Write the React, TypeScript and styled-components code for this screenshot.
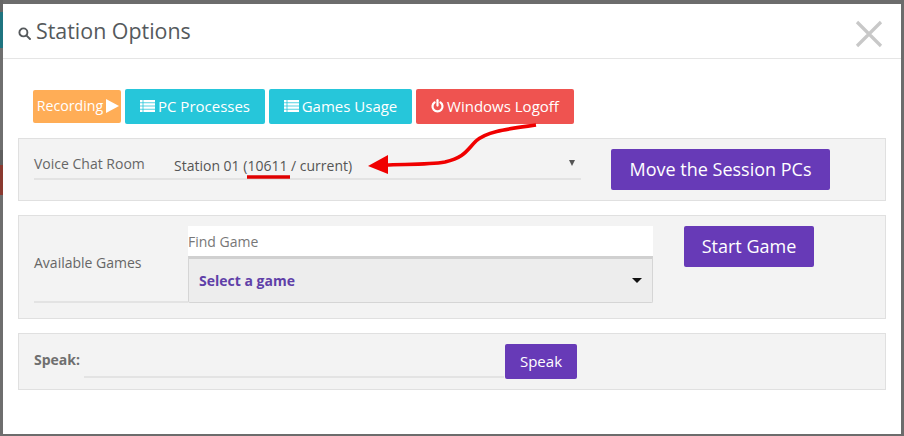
import React from "react";
import styled, { createGlobalStyle } from "styled-components";

const Global = createGlobalStyle`
  html, body { margin: 0; padding: 0; width: 904px; height: 436px; overflow: hidden; background: #6b6b6b; }
  body { font-family: "Open Sans", "Liberation Sans", sans-serif; }
  * { box-sizing: border-box; }
`;

const Backdrop = styled.div`
  width: 904px;
  height: 436px;
  padding: 4px 3px 2px 3px;
  background-color: #6c6c6c;
  background-image: linear-gradient(
    to bottom,
    #666 0 12px,
    #1f7480 12px 48px,
    #6f6f6f 48px 150px,
    #5f5f5f 150px 165px,
    #8a3a30 165px 195px,
    #6e6e6e 195px 100%
  );
  background-size: 3px 100%;
  background-repeat: no-repeat;
`;

const Modal = styled.div`
  position: relative;
  width: 898px;
  height: 430px;
  background: #fff;
`;

const Header = styled.header`
  height: 55px;
  border-bottom: 1px solid #e5e5e5;
  display: flex;
  align-items: center;
  justify-content: space-between;
  padding: 0 18px 0 15px;
`;

const Title = styled.h4`
  margin: 0;
  display: flex;
  align-items: center;
  gap: 5px;
  font-size: 21.4px;
  font-weight: 400;
  color: #55595c;
  line-height: 24px;
`;

const Close = styled.div`
  width: 28px;
  height: 28px;
  margin-top: 5px;
`;

const Body = styled.div`
  padding: 30px 15px 0;
`;

const Toolbar = styled.div`
  display: flex;
  align-items: center;
  gap: 4px;
  padding-left: 15px;
  margin-bottom: 14px;
`;

const ToolButton = styled.div<{ $bg: string; $w: number; $h?: number; $size?: number }>`
  width: ${(p) => p.$w}px;
  height: ${(p) => p.$h ?? 35}px;
  background: ${(p) => p.$bg};
  border-radius: 2px;
  color: #fff;
  font-size: ${(p) => p.$size ?? 15}px;
  display: flex;
  align-items: center;
  justify-content: center;
  gap: 3px;
  padding-bottom: 2px;
  white-space: nowrap;
`;

const RecordingLabel = styled.span`
  margin-left: 2px;
`;

const Panel = styled.section<{ $h: number }>`
  height: ${(p) => p.$h}px;
  background: #f3f3f3;
  border: 1px solid #e0e0e0;
  margin-bottom: 14px;
  display: flex;
  align-items: flex-start;
  padding-left: 15px;
`;

const VoiceField = styled.div`
  width: 547px;
  height: 31px;
  margin-top: 10px;
  border-bottom: 2px solid #e3e3e3;
  display: flex;
  align-items: center;
  position: relative;
`;

const FieldLabel = styled.span<{ $w: number }>`
  width: ${(p) => p.$w}px;
  font-size: 14px;
  color: #666;
  flex: none;
`;

const VoiceValue = styled.span`
  font-size: 14px;
  color: #555;
  margin-top: 3px;
`;

const SmallCaret = styled.span`
  position: absolute;
  right: 6px;
  top: 11px;
  width: 0;
  height: 0;
  border-left: 3px solid transparent;
  border-right: 3px solid transparent;
  border-top: 6px solid #555;
`;

const PurpleButton = styled.div<{ $w: number; $h: number; $size: number; $left: number; $top: number }>`
  width: ${(p) => p.$w}px;
  height: ${(p) => p.$h}px;
  margin-left: ${(p) => p.$left}px;
  margin-top: ${(p) => p.$top}px;
  padding-bottom: 2px;
  flex: none;
  background: #673ab7;
  border-radius: 2px;
  color: #fff;
  font-size: ${(p) => p.$size}px;
  display: flex;
  align-items: center;
  justify-content: center;
  white-space: nowrap;
`;

const GamesLabel = styled.div`
  width: 154px;
  height: 77px;
  margin-top: 10px;
  padding-bottom: 2px;
  border-bottom: 2px solid #e3e3e3;
  display: flex;
  align-items: center;
  flex: none;
`;

const GamesColumn = styled.div`
  width: 465px;
  margin-top: 10px;
  flex: none;
`;

const FindInput = styled.div`
  height: 30px;
  background: #fff;
  font-size: 14px;
  color: #777;
  display: flex;
  align-items: center;
`;

const GameSelect = styled.div`
  height: 47px;
  background: #ededed;
  border: 1px solid #d5d5d5;
  border-top: 3px solid #d0d0d0;
  border-radius: 0 0 2px 2px;
  display: flex;
  align-items: center;
  justify-content: space-between;
  padding: 0 10px 0 10px;
  font-size: 14px;
  font-weight: 700;
  color: #5f3fa8;
`;

const BlackCaret = styled.span`
  width: 0;
  height: 0;
  border-left: 5px solid transparent;
  border-right: 5px solid transparent;
  border-top: 5px solid #111;
`;

const SpeakLabel = styled.span`
  font-size: 14px;
  font-weight: 700;
  color: #6f6f6f;
  margin-top: 16px;
  width: 50px;
  flex: none;
`;

const SpeakInput = styled.div`
  width: 420px;
  height: 34px;
  margin-top: 10px;
  border-bottom: 2px solid #e3e3e3;
  flex: none;
`;

const Annotation = styled.svg`
  position: absolute;
  left: 0;
  top: 0;
  width: 898px;
  height: 430px;
  pointer-events: none;
`;

const ListIcon = () => (
  <svg width="15" height="12" viewBox="0 0 15 12" fill="#fff">
    <rect x="0" y="0" width="2.6" height="2.4" />
    <rect x="3.4" y="0" width="11.6" height="2.4" />
    <rect x="0" y="3.2" width="2.6" height="2.4" />
    <rect x="3.4" y="3.2" width="11.6" height="2.4" />
    <rect x="0" y="6.4" width="2.6" height="2.4" />
    <rect x="3.4" y="6.4" width="11.6" height="2.4" />
    <rect x="0" y="9.6" width="2.6" height="2.4" />
    <rect x="3.4" y="9.6" width="11.6" height="2.4" />
  </svg>
);

const PowerIcon = () => (
  <svg width="13" height="14" viewBox="0 0 13 14" fill="none" stroke="#fff" strokeWidth="2.2" strokeLinecap="round">
    <path d="M3.6 3.4 A5 5 0 1 0 9.4 3.4" />
    <path d="M6.5 1.2 V6.6" />
  </svg>
);

export default function App() {
  return (
    <>
      <Global />
      <Backdrop>
        <Modal>
          <Header>
            <Title>
              <svg width="13" height="13" viewBox="0 0 13 13" fill="none" stroke="#55595c" strokeWidth="1.9" style={{ marginTop: 5 }}>
                <circle cx="5.4" cy="5.4" r="4" />
                <path d="M8.3 8.3 L12 12" strokeLinecap="round" />
              </svg>
              Station Options
            </Title>
            <Close>
              <svg width="28" height="28" viewBox="0 0 28 28" stroke="#c8c8c8" strokeWidth="3.2" fill="none">
                <path d="M2 2 L26 26 M26 2 L2 26" />
              </svg>
            </Close>
          </Header>
          <Body>
            <Toolbar>
              <ToolButton $bg="#ffad56" $w={88} $h={33} $size={14.2}>
                <RecordingLabel>Recording</RecordingLabel>
                <svg width="13" height="14" viewBox="0 0 13 14" fill="#fff"><path d="M0 0 L13 7 L0 14 Z" /></svg>
              </ToolButton>
              <ToolButton $bg="#26c6da" $w={140}><ListIcon />PC Processes</ToolButton>
              <ToolButton $bg="#26c6da" $w={143}><ListIcon />Games Usage</ToolButton>
              <ToolButton $bg="#ef5350" $w={158}><PowerIcon />Windows Logoff</ToolButton>
            </Toolbar>
            <Panel $h={63}>
              <VoiceField>
                <FieldLabel $w={140}>Voice Chat Room</FieldLabel>
                <VoiceValue>Station 01 (10611 / current)</VoiceValue>
                <SmallCaret />
              </VoiceField>
              <PurpleButton $w={219} $h={41} $size={18} $left={30} $top={10}>Move the Session PCs</PurpleButton>
            </Panel>
            <Panel $h={104}>
              <GamesLabel><FieldLabel $w={154}>Available Games</FieldLabel></GamesLabel>
              <GamesColumn>
                <FindInput>Find Game</FindInput>
                <GameSelect>Select a game<BlackCaret /></GameSelect>
              </GamesColumn>
              <PurpleButton $w={130} $h={41} $size={18} $left={31} $top={10}>Start Game</PurpleButton>
            </Panel>
            <Panel $h={57}>
              <SpeakLabel>Speak:</SpeakLabel>
              <SpeakInput />
              <PurpleButton $w={72} $h={35} $size={15} $left={1} $top={10}>Speak</PurpleButton>
            </Panel>
          </Body>
          <Annotation viewBox="0 0 898 430">
            <path d="M533 121 C505 125 484 127 473 137 C463 147 462 153 442 158 C425 161 400 160 382 161" fill="none" stroke="#f00000" strokeWidth="3.6" />
            <path d="M365 162 L385 151 L385 170 Z" fill="#f00000" />
            <path d="M244 173 L287 173" stroke="#e00000" strokeWidth="3.4" fill="none" />
          </Annotation>
        </Modal>
      </Backdrop>
    </>
  );
}
